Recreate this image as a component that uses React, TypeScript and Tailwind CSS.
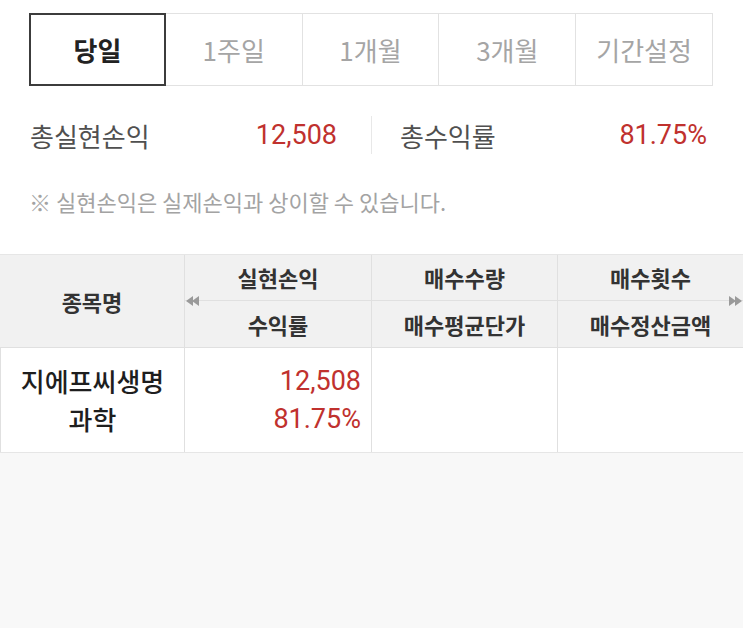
import React from 'react'

const tabs = ['당일', '1주일', '1개월', '3개월', '기간설정']

function DoubleArrow({ dir }: { dir: 'left' | 'right' }) {
  return (
    <svg width="14" height="10" viewBox="0 0 14 10" className="block">
      {dir === 'left' ? (
        <g fill="#9a9a9a">
          <polygon points="0,5 7,0 7,10" />
          <polygon points="6,5 13,0 13,10" />
        </g>
      ) : (
        <g fill="#9a9a9a">
          <polygon points="14,5 7,0 7,10" />
          <polygon points="8,5 1,0 1,10" />
        </g>
      )}
    </svg>
  )
}

export default function App() {
  const font = { fontFamily: '"Noto Sans CJK KR", "Noto Sans", sans-serif' }
  const num = { fontFamily: 'Roboto, sans-serif' }
  return (
    <div className="h-[628px] w-[743px] flex flex-col bg-white" style={font}>
      {/* Period tabs */}
      <div className="pt-[13px] pl-[29px]">
        <div className="flex h-[73px] w-[684px]">
          {tabs.map((t, i) => (
            <div
              key={t}
              className={
                i === 0
                  ? 'w-[137px] flex items-center justify-center border-2 border-[#3c3c3c] text-[26px] font-semibold text-[#222]'
                  : 'w-[137px] flex items-center justify-center border border-l-0 border-[#e2e2e2] text-[26px] text-[#a5a5a5]'
              }
            >
              {t}
            </div>
          ))}
        </div>
      </div>

      {/* Summary */}
      <div className="flex items-center h-[38px] mt-[30px] px-[30px]">
        <div className="flex-1 flex items-center justify-between pr-[34px]">
          <span className="text-[26px] text-[#505050]">총실현손익</span>
          <span className="text-[27px] text-[#c0312e]" style={num}>12,508</span>
        </div>
        <div className="w-px h-[38px] bg-[#e8e8e8]" />
        <div className="flex-1 flex items-center justify-between pl-[28px] pr-[6px]">
          <span className="text-[26px] text-[#505050]">총수익률</span>
          <span className="text-[27px] text-[#c0312e]" style={num}>81.75%</span>
        </div>
      </div>

      {/* Note */}
      <p className="mt-[32px] px-[29px] text-[22px] text-[#a3a3a3] leading-[30px]">
        ※ 실현손익은 실제손익과 상이할 수 있습니다.
      </p>

      {/* Table */}
      <div className="mt-[38px] grid grid-cols-[185px_187px_186px_185px] border-t border-b border-[#e6e6e6]">
        {/* Header */}
        <div className="row-span-2 flex items-center justify-center bg-[#f1f1f1] border-r border-b border-[#e0e0e0] h-[93px] text-[22px] font-semibold text-[#333]">
          종목명
        </div>
        <div className="relative flex items-center justify-center bg-[#f1f1f1] border-r border-b border-[#e0e0e0] h-[46px] text-[22px] font-semibold text-[#333]">
          실현손익
          <span className="absolute left-[1px] -bottom-[6px]">
            <DoubleArrow dir="left" />
          </span>
        </div>
        <div className="flex items-center justify-center bg-[#f1f1f1] border-r border-b border-[#e0e0e0] h-[46px] text-[22px] font-semibold text-[#333]">
          매수수량
        </div>
        <div className="relative flex items-center justify-center bg-[#f1f1f1] border-b border-[#e0e0e0] h-[46px] text-[22px] font-semibold text-[#333]">
          매수횟수
          <span className="absolute right-[1px] -bottom-[6px]">
            <DoubleArrow dir="right" />
          </span>
        </div>
        <div className="flex items-center justify-center bg-[#f1f1f1] border-r border-b border-[#e0e0e0] h-[47px] text-[22px] font-semibold text-[#333]">
          수익률
        </div>
        <div className="flex items-center justify-center bg-[#f1f1f1] border-r border-b border-[#e0e0e0] h-[47px] text-[22px] font-semibold text-[#333]">
          매수평균단가
        </div>
        <div className="flex items-center justify-center bg-[#f1f1f1] border-b border-[#e0e0e0] h-[47px] text-[22px] font-semibold text-[#333]">
          매수정산금액
        </div>

        {/* Row */}
        <div className="flex flex-col items-center justify-center border-r border-l border-[#e0e0e0] h-[104px] text-[26px] font-medium text-[#1e1e1e] leading-[38px]">
          <span>지에프씨생명</span>
          <span>과학</span>
        </div>
        <div className="flex flex-col items-end justify-center pr-[10px] border-r border-[#e0e0e0] h-[104px] text-[27px] text-[#c0312e] leading-[38px]" style={num}>
          <span>12,508</span>
          <span>81.75%</span>
        </div>
        <div className="border-r border-[#e0e0e0] h-[104px]" />
        <div className="h-[104px]" />
      </div>

      <div className="flex-1 bg-[#f8f8f8]" />
    </div>
  )
}
